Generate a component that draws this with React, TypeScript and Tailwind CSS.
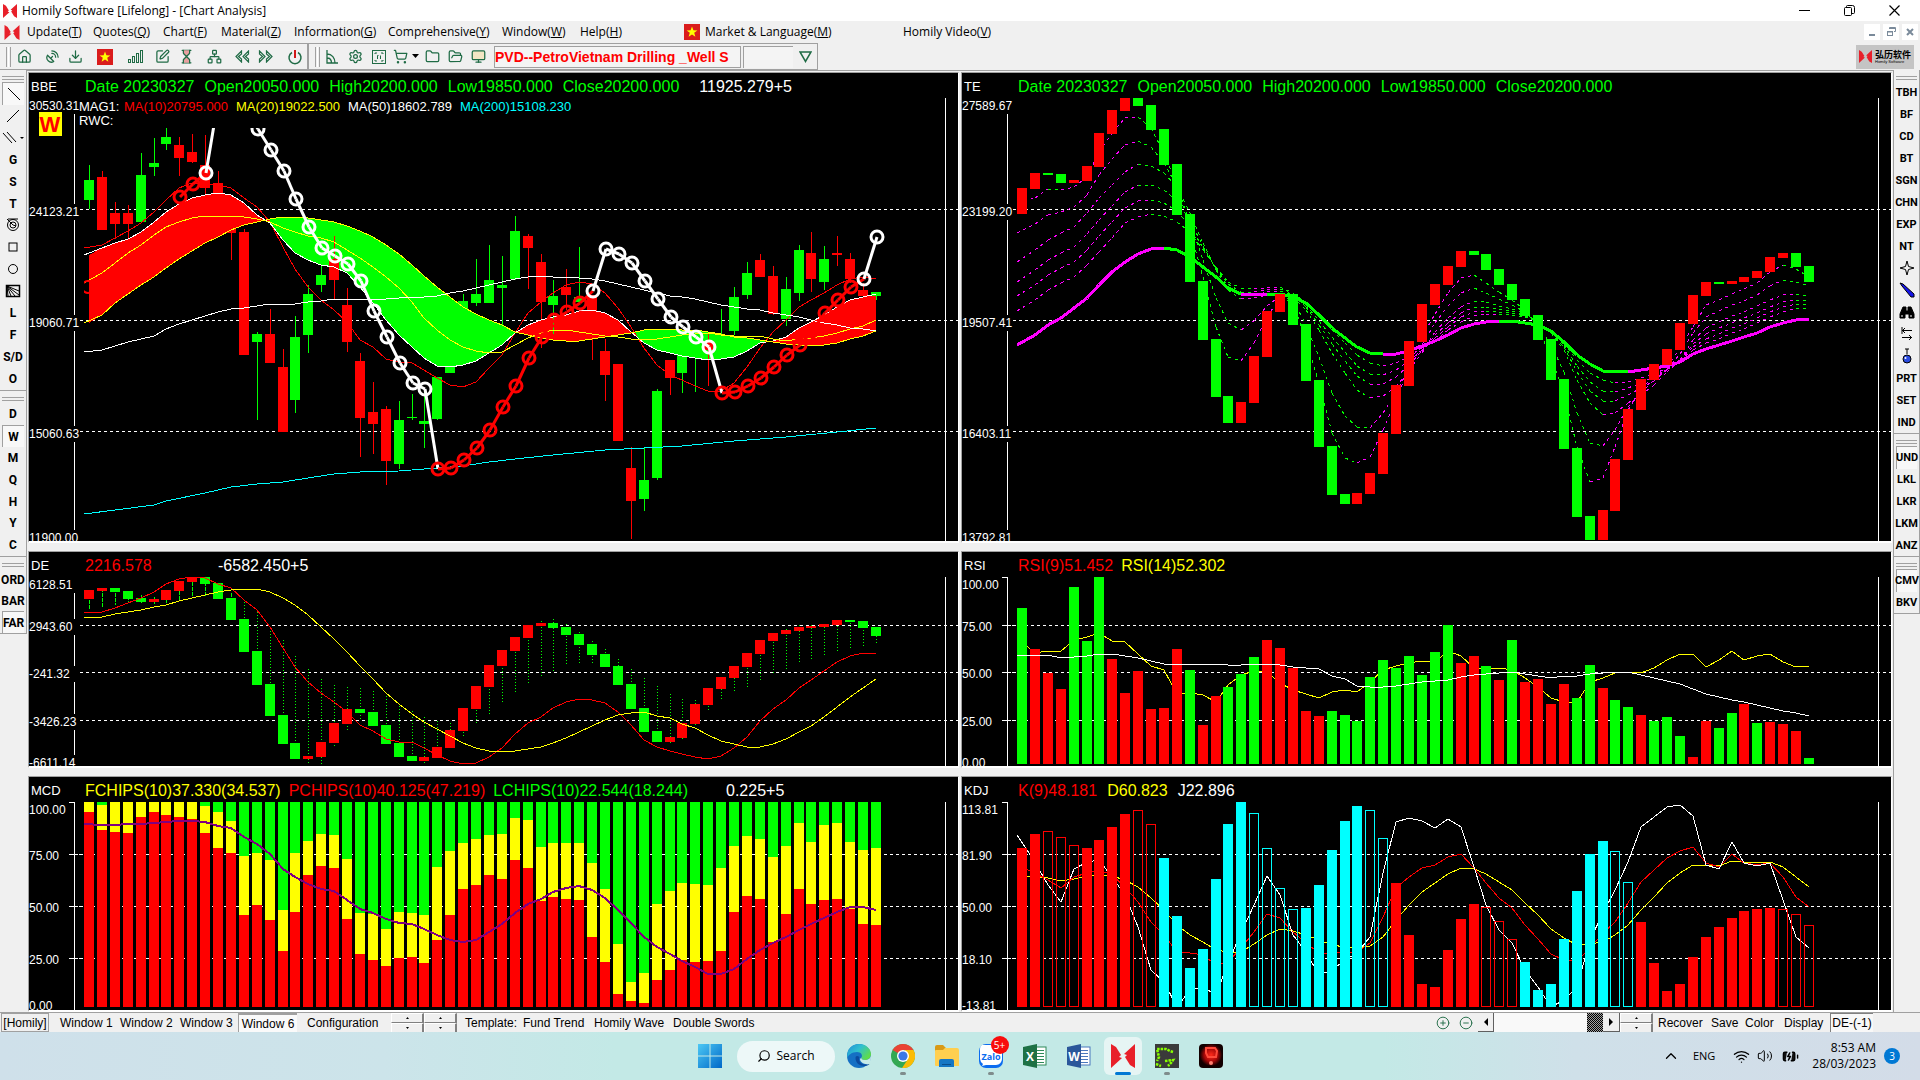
import React from 'react';
import {
  BatteryCharging,
  ChevronUp,
  CircleMinus,
  CirclePlus,
  Download,
  Folder,
  FolderOpen,
  Hourglass,
  House,
  Monitor,
  Network,
  Power,
  SatelliteDish,
  Search,
  Settings,
  ShoppingCart,
  SquarePen,
  Volume2,
  Wifi,
} from 'lucide-react';

const RED = '#ff0000';
const GREEN = '#00ff00';
const YELLOW = '#ffff00';
const CYAN = '#00ffff';
const WHITE = '#ffffff';
const MAGENTA = '#ff00ff';

// Series are stored in thirds of a pixel, one entry for each weekly bar.
const px = (v: number) => Math.round(v / 3);
const barX = (i: number) => Math.round(55 + 12.9 * i);
const midX = (i: number) => Math.round(60 + 12.9 * i);
const lineX = (i: number) => (i === 0 ? 55 : midX(i));
const toPoints = (ys: number[]) => ys.map((y, i) => `${lineX(i)},${px(y)}`).join(' ');

type Candle = [string, number, number, number, number];

const candles: Candle[] = [
  ['G', 330, 390, 285, 417], ['R', 321, 480, 303, 480], ['R', 429, 462, 396, 507], ['R', 429, 462, 405, 507],
  ['G', 315, 456, 249, 456], ['G', 279, 291, 204, 318], ['G', 201, 222, 174, 240], ['R', 225, 264, 201, 318],
  ['R', 246, 276, 192, 279], ['R', 285, 354, 195, 375], ['R', 339, 420, 303, 420], ['R', 400, 489, 400, 570],
  ['R', 486, 855, 477, 855], ['G', 792, 816, 786, 1050], ['R', 792, 879, 717, 879], ['R', 891, 1086, 837, 1086],
  ['G', 801, 990, 738, 1029], ['G', 672, 795, 645, 849], ['G', 615, 645, 582, 666], ['R', 567, 630, 498, 687],
  ['R', 705, 816, 654, 846], ['R', 873, 1044, 849, 1161], ['R', 1026, 1062, 936, 1152], ['R', 1017, 1173, 1008, 1245],
  ['G', 1050, 1182, 993, 1197], ['G', 1041, 1044, 972, 1050], ['G', 1053, 1062, 960, 1134], ['G', 921, 1047, 921, 1050],
  ['G', 870, 909, 870, 909], ['G', 693, 735, 672, 735], ['G', 672, 699, 567, 708], ['G', 630, 699, 525, 699],
  ['G', 645, 654, 558, 765], ['G', 483, 627, 438, 630], ['R', 498, 534, 492, 657], ['R', 576, 696, 552, 834],
  ['G', 678, 705, 630, 792], ['R', 651, 675, 597, 720], ['G', 681, 696, 531, 700], ['R', 675, 740, 675, 870],
  ['R', 843, 915, 807, 993], ['R', 882, 1113, 882, 1113], ['R', 1194, 1293, 1131, 1407], ['G', 1230, 1287, 1131, 1323],
  ['G', 963, 1224, 957, 1230], ['R', 870, 924, 870, 975], ['G', 840, 909, 840, 969], ['G', 800, 810, 800, 966],
  ['R', 816, 840, 792, 948], ['G', 795, 800, 717, 800], ['G', 681, 783, 651, 795], ['G', 609, 675, 576, 687],
  ['R', 570, 621, 552, 621], ['R', 618, 732, 588, 735], ['G', 657, 747, 621, 768], ['G', 540, 669, 525, 693],
  ['R', 549, 627, 486, 666], ['G', 567, 636, 528, 660], ['R', 549, 555, 498, 588], ['R', 567, 627, 549, 640],
  ['R', 660, 678, 640, 678], ['G', 666, 678, 666, 690],
];

const fastBand = [
  555, 535, 520, 507, 487, 457, 425, 402, 384, 375, 370, 375, 400, 435, 458, 510, 548, 570, 585, 590, 610, 650, 700,
  750, 795, 830, 865, 888, 892, 885, 872, 850, 825, 790, 765, 750, 742, 735, 722, 720, 730, 750, 785, 820, 840, 850,
  857, 865, 870, 868, 860, 842, 820, 812, 800, 775, 755, 735, 710, 690, 682, 673,
];
const slowBand = [
  760, 735, 700, 672, 645, 622, 595, 568, 543, 520, 500, 480, 465, 455, 446, 442, 442, 444, 449, 457, 467, 482, 502,
  525, 553, 585, 617, 650, 680, 710, 732, 750, 765, 785, 795, 805, 811, 814, 812, 808, 800, 795, 788, 780, 778, 778,
  779, 780, 785, 792, 800, 805, 810, 816, 821, 824, 827, 825, 818, 808, 798, 783,
];
const ma20 = [
  640, 610, 580, 550, 525, 495, 470, 455, 444, 439, 438, 437, 442, 447, 455, 475, 487, 497, 505, 515, 540, 565, 590,
  620, 655, 695, 743, 780, 810, 830, 843, 850, 845, 825, 805, 788, 780, 780, 785, 793, 798, 802, 808, 810, 806, 800,
  795, 792, 790, 795, 797, 797, 798, 807, 814, 808, 804, 798, 790, 778, 768, 750,
];
const ma10 = [
  535, 525, 505, 483, 458, 425, 390, 355, 340, 342, 345, 355, 383, 412, 455, 530, 597, 650, 690, 720, 755, 810, 832,
  868, 876, 878, 900, 925, 945, 952, 935, 895, 855, 790, 730, 695, 668, 645, 637, 643, 668, 715, 770, 835, 885, 915,
  930, 948, 964, 962, 940, 890, 835, 785, 750, 712, 690, 668, 645, 628, 620, 627,
];
const ma50 = [
  847, 840, 827, 817, 808, 797, 778, 762, 750, 737, 726, 718, 713, 707, 703, 703, 702, 697, 692, 688, 686, 688, 688,
  688, 685, 682, 680, 677, 670, 662, 655, 645, 635, 627, 622, 619, 620, 620, 623, 627, 634, 642, 650, 660, 668, 677,
  682, 688, 697, 704, 712, 716, 720, 728, 735, 741, 750, 758, 766, 773, 777, 782,
];
const ma200: [number, number][] = [
  [0, 1333], [5, 1304], [6, 1292], [9, 1268], [11, 1252], [13, 1243], [15, 1236], [17, 1225], [19, 1213], [21, 1207],
  [24, 1202], [27, 1193], [29, 1187], [31, 1177], [33, 1168], [36, 1155], [40, 1140], [43, 1134], [46, 1127],
  [50, 1114], [54, 1100], [58, 1085], [61, 1075],
];

// [bar, y, colour]
const rwc: [number, number, string][] = [
  [7, 380, RED], [8, 343, RED], [9, 310, WHITE], [10, 75, WHITE], [12, 110, WHITE], [13, 176, WHITE], [14, 240, WHITE],
  [15, 302, WHITE], [16, 388, WHITE], [17, 472, WHITE], [18, 534, WHITE], [19, 558, WHITE], [20, 583, WHITE],
  [21, 633, WHITE], [22, 723, WHITE], [23, 800, WHITE], [24, 878, WHITE], [25, 938, WHITE], [26, 957, WHITE],
  [27, 1197, RED], [28, 1193, RED], [29, 1170, RED], [30, 1135, RED], [31, 1080, RED], [32, 1012, RED], [33, 948, RED],
  [34, 865, RED], [35, 800, RED], [36, 750, RED], [37, 727, RED], [38, 699, RED], [39, 664, WHITE], [40, 538, WHITE],
  [41, 552, WHITE], [42, 580, WHITE], [43, 632, WHITE], [44, 688, WHITE], [45, 742, WHITE], [46, 772, WHITE],
  [47, 802, WHITE], [48, 831, WHITE], [49, 970, RED], [50, 965, RED], [51, 948, RED], [52, 925, RED], [53, 890, RED],
  [54, 856, RED], [55, 825, RED], [56, 782, RED], [57, 728, RED], [58, 690, RED], [59, 650, RED], [60, 628, WHITE],
  [61, 502, WHITE],
];

const teBars: [string, number, number][] = [
  ['R', 354, 432], ['R', 309, 357], ['G', 309, 315], ['G', 312, 339], ['R', 330, 339], ['R', 288, 333], ['R', 189, 291],
  ['R', 120, 192], ['R', 84, 123], ['G', 84, 108], ['G', 105, 180], ['G', 177, 285], ['G', 282, 435], ['G', 432, 636],
  ['G', 633, 810], ['G', 807, 981], ['G', 978, 1059], ['R', 996, 1059], ['R', 858, 999], ['R', 723, 861],
  ['R', 672, 726], ['G', 672, 765], ['G', 762, 933], ['G', 930, 1131], ['G', 1128, 1275], ['G', 1272, 1302],
  ['R', 1269, 1302], ['R', 1209, 1272], ['R', 1089, 1212], ['R', 945, 1092], ['R', 813, 948], ['R', 702, 816],
  ['R', 642, 705], ['R', 588, 645], ['R', 543, 591], ['G', 543, 555], ['G', 552, 600], ['G', 597, 645],
  ['G', 642, 690], ['G', 687, 738], ['G', 735, 810], ['G', 807, 930], ['G', 927, 1137], ['G', 1134, 1341],
  ['G', 1338, 1410], ['R', 1320, 1410], ['R', 1167, 1323], ['R', 1017, 1170], ['R', 927, 1020], ['R', 882, 930],
  ['R', 837, 885], ['R', 759, 840], ['R', 675, 762], ['R', 636, 678], ['G', 636, 642], ['R', 633, 642],
  ['R', 621, 636], ['R', 603, 624], ['R', 561, 606], ['R', 549, 564], ['G', 549, 591], ['G', 588, 636],
];
const teBase = [
  824, 795, 765, 745, 715, 685, 645, 607, 575, 552, 538, 533, 540, 562, 590, 622, 655, 671, 671, 671, 672, 680, 700,
  735, 775, 805, 830, 848, 853, 852, 842, 828, 813, 795, 775, 763, 756, 753, 754, 758, 766, 782, 815, 855, 883, 902,
  904, 905, 901, 895, 888, 875, 852, 838, 826, 813, 800, 788, 772, 760, 751, 748,
];
const teFast = [
  400, 385, 358, 361, 350, 320, 245, 190, 143, 140, 175, 250, 345, 480, 620, 770, 860, 873, 820, 740, 685, 700, 810,
  940, 1090, 1165, 1180, 1162, 1080, 990, 890, 800, 732, 668, 625, 616, 640, 665, 690, 720, 775, 860, 970, 1130, 1237,
  1223, 1130, 1020, 960, 915, 890, 835, 770, 705, 690, 672, 658, 640, 605, 586, 597, 620,
];
const teMid = [
  575, 540, 510, 490, 470, 430, 385, 345, 305, 283, 288, 310, 350, 430, 520, 600, 660, 688, 685, 675, 670, 680, 720,
  780, 850, 910, 960, 983, 978, 950, 900, 850, 785, 745, 710, 693, 697, 707, 718, 732, 755, 790, 840, 930, 1000, 1035,
  1030, 1000, 975, 945, 905, 870, 810, 775, 755, 738, 725, 708, 690, 675, 672, 677,
];
const teSlow = [
  724, 690, 660, 640, 620, 585, 545, 505, 460, 440, 433, 437, 455, 485, 540, 590, 635, 655, 658, 655, 652, 670, 700,
  740, 780, 820, 855, 880, 887, 880, 860, 835, 812, 780, 755, 738, 733, 732, 734, 740, 757, 785, 820, 870, 910, 930,
  938, 935, 925, 912, 895, 870, 840, 820, 806, 790, 776, 760, 742, 725, 714, 718,
];
const mix = (a: number[], b: number[], t: number) => a.map((v, i) => v + (b[i] - v) * t);
const teRibbon = [teFast, mix(teFast, teMid, 0.5), teMid, mix(teMid, teSlow, 0.4), mix(teMid, teSlow, 0.7), teSlow];

const deBars: Candle[] = [
  ['R', 150, 177, 150, 210], ['R', 144, 153, 144, 200], ['G', 144, 156, 144, 195], ['G', 153, 177, 153, 189],
  ['G', 174, 186, 165, 189], ['R', 177, 186, 171, 192], ['R', 150, 180, 150, 189], ['R', 123, 153, 123, 183],
  ['R', 111, 126, 111, 172], ['G', 111, 132, 111, 168], ['G', 129, 177, 129, 177], ['G', 174, 240, 160, 240],
  ['G', 237, 336, 186, 336], ['G', 333, 435, 216, 435], ['G', 432, 528, 264, 528], ['G', 525, 612, 300, 612],
  ['G', 609, 657, 348, 657], ['R', 648, 657, 387, 675], ['R', 606, 651, 417, 672], ['R', 549, 609, 435, 624],
  ['R', 507, 552, 441, 573], ['G', 507, 519, 444, 543], ['G', 516, 558, 453, 558], ['G', 555, 612, 468, 612],
  ['G', 609, 651, 498, 651], ['G', 648, 663, 513, 663], ['R', 651, 663, 531, 669], ['R', 621, 654, 543, 660],
  ['R', 570, 624, 549, 624], ['R', 504, 573, 504, 591], ['R', 438, 507, 438, 555], ['R', 375, 441, 375, 522],
  ['R', 330, 378, 330, 489], ['R', 291, 333, 291, 462], ['R', 255, 294, 255, 435], ['R', 249, 258, 243, 411],
  ['G', 249, 264, 237, 393], ['G', 261, 285, 252, 378], ['G', 282, 315, 276, 372], ['G', 312, 345, 303, 369],
  ['G', 342, 381, 327, 381], ['G', 378, 435, 357, 435], ['G', 432, 507, 387, 507], ['G', 504, 576, 414, 576],
  ['G', 573, 606, 438, 606], ['R', 591, 606, 462, 615], ['R', 549, 594, 477, 603], ['R', 492, 552, 480, 560],
  ['R', 444, 495, 444, 516], ['R', 411, 447, 411, 483], ['R', 378, 414, 378, 456], ['R', 339, 381, 339, 441],
  ['R', 300, 342, 300, 423], ['R', 279, 303, 279, 405], ['R', 270, 282, 267, 387], ['R', 261, 273, 255, 372],
  ['R', 258, 264, 255, 357], ['R', 252, 261, 252, 348], ['R', 240, 255, 240, 336], ['G', 240, 246, 240, 324],
  ['G', 243, 264, 243, 318], ['G', 261, 288, 261, 312],
];
const deFast = [
  217, 217, 205, 190, 175, 155, 132, 118, 112, 113, 132, 145, 180, 210, 260, 325, 380, 425, 460, 485, 515, 555, 572,
  597, 606, 607, 625, 645, 663, 673, 670, 650, 625, 582, 550, 532, 505, 485, 478, 481, 490, 517, 555, 600, 622, 634,
  643, 650, 656, 649, 625, 590, 543, 508, 480, 443, 420, 393, 367, 347, 340, 343,
];
const deSlow = [
  235, 230, 222, 216, 211, 202, 194, 184, 173, 164, 155, 149, 146, 146, 155, 175, 195, 225, 260, 297, 335, 378, 418,
  460, 492, 522, 545, 567, 587, 608, 623, 633, 637, 634, 628, 621, 610, 593, 575, 558, 540, 524, 518, 517, 527, 535,
  551, 565, 584, 602, 613, 622, 622, 613, 598, 576, 557, 530, 500, 471, 443, 417,
];

const chips: [number, number][] = [
  [786, 816], [795, 870], [786, 876], [786, 879], [786, 831], [786, 816], [786, 825], [786, 831], [786, 837],
  [798, 879], [816, 924], [843, 939], [948, 1125], [939, 1095], [960, 1140], [1110, 1233], [939, 1116], [903, 1005],
  [882, 978], [885, 984], [957, 1137], [1119, 1242], [1122, 1260], [1167, 1278], [1116, 1254], [1119, 1251],
  [1125, 1269], [981, 1200], [933, 1125], [909, 1047], [897, 1035], [885, 1005], [882, 1017], [834, 960], [840, 984],
  [921, 1083], [909, 1071], [909, 1077], [909, 1080], [969, 1191], [1047, 1266], [1212, 1362], [1326, 1383],
  [1299, 1389], [1092, 1320], [1053, 1290], [1029, 1260], [1032, 1266], [1035, 1263], [984, 1233], [918, 1116],
  [888, 1068], [897, 1077], [951, 1206], [918, 1122], [849, 1047], [906, 1092], [855, 1080], [849, 1077], [906, 1107],
  [930, 1152], [924, 1155],
];
const chipsLine = [
  852, 854, 855, 852, 852, 848, 846, 842, 843, 847, 858, 865, 890, 912, 943, 987, 1012, 1032, 1046, 1053, 1080, 1107,
  1120, 1138, 1150, 1153, 1168, 1185, 1200, 1206, 1200, 1175, 1152, 1118, 1092, 1077, 1055, 1043, 1038, 1050, 1075,
  1110, 1150, 1190, 1222, 1243, 1263, 1281, 1301, 1301, 1287, 1257, 1229, 1210, 1192, 1169, 1151, 1133, 1115, 1101,
  1102, 1110,
];

const rsiBars =
  'G204 R327 R399 R447 G141 G303 G111 R357 R459 R393 R507 R504 R327 G390 R555 R468 G441 G402 G351 R300 R324 R384 R513 R528 G513 G525 G543 G411 G360 G384 G348 G405 G336 G255 R369 R348 G378 R420 G300 R426 R417 R492 R432 G474 G375 R444 G480 G501 R525 G543 G531 G588 R651 R543 G564 G519 R492 G549 R546 R552 R573 G654'.split(
    ' ',
  );
const rsiYellow = [
  295, 338, 334, 334, 300, 290, 280, 303, 307, 343, 378, 390, 462, 460, 464, 487, 435, 405, 393, 395, 430, 450, 462,
  475, 455, 451, 455, 425, 390, 377, 370, 362, 365, 333, 347, 385, 385, 385, 390, 415, 440, 473, 487, 487, 425, 413,
  398, 396, 398, 385, 360, 341, 343, 380, 360, 332, 360, 347, 343, 367, 382, 379,
];
const rsiWhite = [
  349, 344, 344, 355, 350, 349, 341, 341, 349, 355, 362, 373, 374, 371, 376, 373, 376, 374, 371, 371, 376, 380, 384,
  388, 408, 418, 438, 442, 440, 439, 431, 425, 424, 419, 410, 404, 401, 400, 397, 403, 409, 415, 409, 409, 401, 398,
  395, 397, 406, 415, 424, 433, 448, 463, 472, 481, 487, 494, 505, 512, 520, 529,
];

// lower case = hollow bar
const kdjBars =
  'R924 R882 r873 r891 r915 R924 R900 R861 R822 r810 r852 C954 C1128 C1284 C1227 C1017 C852 C786 c819 c924 c1044 c1107 C1104 C1035 C930 C843 C798 c810 c894 R1029 R1185 R1332 R1341 R1230 R1137 R1092 r1101 r1143 r1197 C1266 C1350 C1332 C1197 C1053 C942 C903 c933 c1026 R1146 R1269 R1353 R1332 R1251 R1191 R1161 R1134 R1113 R1107 R1104 r1107 r1122 r1155'.split(
    ' ',
  );
const kdjJ = [
  884, 965, 1035, 1086, 988, 965, 960, 1010, 1065, 1160, 1290, 1325, 1400, 1350, 1340, 1365, 1270, 1180, 1095, 1008,
  1065, 1185, 1235, 1305, 1290, 1260, 1240, 1190, 1000, 845, 835, 842, 865, 838, 862, 980, 1095, 1170, 1210, 1290,
  1340, 1400, 1380, 1340, 1200, 1120, 1050, 965, 860, 830, 800, 794, 827, 975, 987, 905, 968, 978, 970, 1080, 1190,
  1223,
];
const kdjK = [
  975, 1000, 1020, 1045, 1010, 998, 990, 1005, 1040, 1085, 1145, 1185, 1235, 1238, 1245, 1275, 1265, 1225, 1175, 1123,
  1133, 1175, 1210, 1240, 1238, 1237, 1235, 1210, 1130, 1045, 1010, 985, 975, 950, 943, 985, 1030, 1075, 1105, 1155,
  1198, 1242, 1260, 1262, 1225, 1180, 1145, 1090, 1025, 990, 955, 933, 922, 970, 980, 943, 968, 975, 970, 1010, 1072,
  1102,
];
const kdjD = [
  1008, 1010, 1013, 1024, 1017, 1008, 1006, 1008, 1020, 1040, 1073, 1110, 1155, 1185, 1205, 1230, 1237, 1235, 1213,
  1185, 1168, 1172, 1185, 1200, 1215, 1220, 1223, 1218, 1190, 1140, 1095, 1055, 1030, 1003, 985, 986, 1003, 1026,
  1050, 1088, 1125, 1166, 1195, 1216, 1212, 1205, 1185, 1155, 1110, 1070, 1030, 998, 974, 974, 977, 964, 967, 968,
  967, 980, 1010, 1040,
];

const colorOf: Record<string, string> = { R: RED, G: GREEN, C: CYAN };

function Line({ data, color, width = 1 }: { data: number[]; color: string; width?: number }) {
  return <polyline points={toPoints(data)} fill="none" stroke={color} strokeWidth={width} />;
}

// Line whose colour follows its direction
function TrendLine({ data, dashed }: { data: number[]; dashed?: boolean }) {
  return (
    <g strokeWidth={dashed ? 1 : 3} strokeDasharray={dashed ? '3 4' : undefined}>
      {data.slice(1).map((y, i) => (
        <line
          key={i}
          x1={lineX(i)}
          y1={px(data[i])}
          x2={midX(i + 1)}
          y2={px(y)}
          stroke={y > data[i] ? GREEN : MAGENTA}
        />
      ))}
    </g>
  );
}

function Grid({ rows }: { rows: number[] }) {
  return (
    <g stroke={WHITE}>
      {rows.map((y) => (
        <line key={y} x1="51" x2="100%" y1={y + 0.5} y2={y + 0.5} strokeDasharray="3 3" />
      ))}
      <line x1="916.5" x2="916.5" y1="25" y2="100%" />
    </g>
  );
}

interface AxisProps {
  labels: [string, number][];
  ticks?: number[];
  top: number;
}

function Axis({ labels, ticks, top }: AxisProps) {
  return (
    <g>
      <line x1="45.5" x2="45.5" y1={top} y2="100%" stroke={WHITE} />
      {ticks && <line x1="40" x2="46" y1={top + 0.5} y2={top + 0.5} stroke={WHITE} />}
      {ticks?.map((y) => <line key={y} x1="40" x2="53" y1={y + 0.5} y2={y + 0.5} stroke={WHITE} strokeDasharray="9 1" />)}
      {labels.map(([text, y]) => (
        <g key={text}>
          {!ticks && <rect x="0" y={y - 7} width="51" height="16" fill="#000" />}
          <text x="0" y={y + 5} fontSize="12" fill={WHITE}>
            {text}
          </text>
        </g>
      ))}
    </g>
  );
}

interface PanelProps {
  name: string;
  header: React.ReactNode;
  children: React.ReactNode;
}

function Panel({ name, header, children }: PanelProps) {
  return (
    <section
      aria-label={name}
      className="relative overflow-hidden border-t border-r border-b-2 border-l border-t-[#a0a0a0] border-r-white border-b-white border-l-[#a0a0a0] bg-black"
    >
      <svg className="absolute inset-0 h-full w-full" shapeRendering="crispEdges">
        {children}
      </svg>
      <div className="relative">
        <div className="flex h-7 items-center whitespace-nowrap text-[16px]">
          <h2 className="w-14 pl-0.5 text-[13px] text-white">{name}</h2>
          {header}
        </div>
      </div>
    </section>
  );
}

function Quote() {
  return (
    <div className="flex gap-2.5 text-[#00ff00]">
      <span>Date 20230327</span>
      <span>Open20050.000</span>
      <span>High20200.000</span>
      <span>Low19850.000</span>
      <span>Close20200.000</span>
    </div>
  );
}

function BbeChart() {
  const bands: React.ReactNode[] = [];
  for (let i = 0; i < 61; i++) {
    const a = midX(i);
    const b = midX(i + 1);
    const bull = fastBand[i] + fastBand[i + 1] < slowBand[i] + slowBand[i + 1];
    bands.push(
      <polygon
        key={i}
        fill={bull ? RED : GREEN}
        points={`${a},${px(fastBand[i])} ${b},${px(fastBand[i + 1])} ${b},${px(slowBand[i + 1])} ${a},${px(slowBand[i])}`}
      />,
    );
  }

  return (
    <Panel
      name="BBE"
      header={
        <>
          <Quote />
          <span className="ml-5 text-white">11925.279+5</span>
        </>
      }
    >
      <Grid rows={[136, 247, 358]} />
      <Axis
        top={40}
        labels={[
          ['30530.31', 32],
          ['24123.21', 138],
          ['19060.71', 249],
          ['15060.63', 360],
          ['11900.00', 464],
        ]}
      />
      <g fontSize="13">
        <text x="50" y="38" fill={WHITE}>MAG1:</text>
        <text x="95" y="38" fill={RED}>MA(10)20795.000</text>
        <text x="207" y="38" fill={YELLOW}>MA(20)19022.500</text>
        <text x="319" y="38" fill={WHITE}>MA(50)18602.789</text>
        <text x="431" y="38" fill={CYAN}>MA(200)15108.230</text>
        <text x="50" y="52" fill={WHITE}>RWC:</text>
      </g>
      <rect x="10" y="39" width="23" height="24" fill={YELLOW} />
      <text x="21" y="59" fill={RED} fontSize="22" fontWeight="bold" textAnchor="middle">
        W
      </text>
      <g transform="translate(0 -3)">
        {bands}
        {candles.map(([c, top, bottom, high, low], i) => (
          <g key={i} fill={colorOf[c]}>
            <rect x={barX(i)} y={px(top)} width="10" height={Math.max(1, px(bottom) - px(top))} />
            <rect x={barX(i) + 5} y={px(high)} width="1" height={px(low) - px(high)} />
          </g>
        ))}
        <Line data={ma10} color={RED} />
        <Line data={fastBand} color={WHITE} />
        <Line data={slowBand} color={YELLOW} />
        <Line data={ma20} color={YELLOW} />
        <Line data={ma50} color={WHITE} />
        <polyline points={ma200.map(([i, y]) => `${lineX(i)},${px(y)}`).join(' ')} fill="none" stroke={CYAN} />
        <clipPath id="plot">
          <rect x="55" y="58" width="860" height="420" />
        </clipPath>
        <g clipPath="url(#plot)" fill="none" shapeRendering="auto">
          <circle cx="59" cy="217" r="6" stroke={RED} strokeWidth="2" />
          {rwc.slice(1).map(([i, y], k) => (
            <line
              key={i}
              x1={midX(rwc[k][0]) + 1}
              y1={px(rwc[k][1])}
              x2={midX(i) + 1}
              y2={px(y)}
              stroke={rwc[k][2]}
              strokeWidth="3"
            />
          ))}
          {rwc.map(([i, y, c]) => (
            <circle key={i} cx={midX(i) + 1} cy={px(y)} r="6" stroke={c} strokeWidth="3" />
          ))}
        </g>
      </g>
    </Panel>
  );
}

function TeChart() {
  return (
    <Panel name="TE" header={<Quote />}>
      <Grid rows={[136, 247, 358]} />
      <Axis
        top={40}
        labels={[
          ['27589.67', 32],
          ['23199.20', 138],
          ['19507.41', 249],
          ['16403.11', 360],
          ['13792.81', 464],
        ]}
      />
      <g transform="translate(0 -3)">
        {teRibbon.map((data, i) => (
          <TrendLine key={i} data={data} dashed />
        ))}
        <TrendLine data={teBase} />
        {teBars.map(([c, top, bottom], i) => (
          <rect key={i} x={barX(i)} y={px(top)} width="10" height={px(bottom) - px(top)} fill={colorOf[c]} />
        ))}
      </g>
    </Panel>
  );
}

function DeChart() {
  return (
    <Panel
      name="DE"
      header={
        <>
          <span className="w-[133px] text-[#ff0000]">2216.578</span>
          <span className="text-white">-6582.450+5</span>
        </>
      }
    >
      <Grid rows={[73, 120, 168]} />
      <Axis
        top={40}
        labels={[
          ['6128.51', 32],
          ['2943.60', 74],
          ['-241.32', 121],
          ['-3426.23', 169],
          ['-6611.14', 210],
        ]}
      />
      <g transform="translate(0 -12)">
        {deBars.map(([c, top, bottom, high, low], i) => (
          <g key={i}>
            <line
              x1={barX(i) + 5.5}
              x2={barX(i) + 5.5}
              y1={px(high)}
              y2={px(low)}
              stroke={GREEN}
              strokeDasharray={i < 12 ? '4 1' : '1 2'}
            />
            <rect x={barX(i)} y={px(top)} width="10" height={px(bottom) - px(top)} fill={colorOf[c]} />
          </g>
        ))}
        <Line data={deFast} color={RED} />
        <Line data={deSlow} color={YELLOW} />
      </g>
    </Panel>
  );
}

function RsiChart() {
  return (
    <Panel
      name="RSI"
      header={
        <div className="flex gap-2">
          <span className="text-[#ff0000]">RSI(9)51.452</span>
          <span className="text-[#ffff00]">RSI(14)52.302</span>
        </div>
      }
    >
      <Grid rows={[73, 120, 168]} />
      <Axis
        top={25}
        ticks={[73, 120, 168]}
        labels={[
          ['100.00', 32],
          ['75.00', 74],
          ['50.00', 121],
          ['25.00', 169],
          ['0.00', 210],
        ]}
      />
      <g transform="translate(0 -12)">
        <Line data={rsiYellow} color={YELLOW} />
        {rsiBars.map((bar, i) => {
          const y = px(Number(bar.slice(1)));
          return <rect key={i} x={barX(i)} y={y} width="10" height={224 - y} fill={colorOf[bar[0]]} />;
        })}
        <Line data={rsiWhite} color={WHITE} />
      </g>
    </Panel>
  );
}

function McdChart() {
  return (
    <Panel
      name="MCD"
      header={
        <>
          <div className="flex gap-2">
            <span className="text-[#ffff00]">FCHIPS(10)37.330(34.537)</span>
            <span className="text-[#ff0000]">PCHIPS(10)40.125(47.219)</span>
            <span className="text-[#00ff00]">LCHIPS(10)22.544(18.244)</span>
          </div>
          <span className="ml-[38px] text-white">0.225+5</span>
        </>
      }
    >
      <Grid rows={[77, 129, 181]} />
      <Axis
        top={25}
        ticks={[77, 129, 181]}
        labels={[
          ['100.00', 32],
          ['75.00', 78],
          ['50.00', 130],
          ['25.00', 182],
          ['0.00', 228],
        ]}
      />
      <g transform="translate(0 -237)">
        {chips.map(([green, yellow], i) => (
          <g key={i}>
            <rect x={barX(i)} y="262" width="10" height="205" fill={RED} />
            <rect x={barX(i)} y="262" width="10" height={px(yellow) - 262} fill={YELLOW} />
            <rect x={barX(i)} y="262" width="10" height={px(green) - 262} fill={GREEN} />
          </g>
        ))}
        <Line data={chipsLine} color="#800080" width={2} />
      </g>
    </Panel>
  );
}

function KdjChart() {
  return (
    <Panel
      name="KDJ"
      header={
        <div className="flex gap-2.5">
          <span className="text-[#ff0000]">K(9)48.181</span>
          <span className="text-[#ffff00]">D60.823</span>
          <span className="text-white">J22.896</span>
        </div>
      }
    >
      <Grid rows={[77, 129, 181]} />
      <Axis
        top={25}
        ticks={[77, 129, 181]}
        labels={[
          ['113.81', 32],
          ['81.90', 78],
          ['50.00', 130],
          ['18.10', 182],
          ['-13.81', 228],
        ]}
      />
      <g transform="translate(0 -237)">
        <Line data={kdjD} color={YELLOW} />
        <Line data={kdjK} color={RED} />
        <Line data={kdjJ} color={WHITE} />
        {kdjBars.map((bar, i) => {
          const y = px(Number(bar.slice(1)));
          const kind = bar[0].toUpperCase();
          return bar[0] === kind ? (
            <rect key={i} x={barX(i)} y={y} width="10" height={467 - y} fill={colorOf[kind]} />
          ) : (
            <rect key={i} x={barX(i) + 0.5} y={y + 0.5} width="9" height={466 - y} fill="none" stroke={colorOf[kind]} />
          );
        })}
      </g>
    </Panel>
  );
}

function BrandMark({ className }: { className?: string }) {
  return (
    <svg viewBox="0 0 24 24" className={className} fill="#e8202a" aria-hidden="true">
      <path d="M0 0 L5 3 L10 11 L8 13 L11 14 L0 24 Z" />
      <path d="M24 0 L24 24 L19 21 L14 13 L16 11 L13 10 Z" />
    </svg>
  );
}

function StarFlag({ className }: { className?: string }) {
  return (
    <svg viewBox="0 0 16 16" className={className} aria-hidden="true">
      <rect width="16" height="16" fill="#da1c1c" />
      <path d="M8 2.5 L9.4 6.3 L13.4 6.4 L10.2 8.8 L11.4 12.8 L8 10.4 L4.6 12.8 L5.8 8.8 L2.6 6.4 L6.6 6.3 Z" fill="#ffff00" />
    </svg>
  );
}

const menus = [
  { label: 'Update', hot: 'T', width: 'w-[66px]' },
  { label: 'Quotes', hot: 'Q', width: 'w-[70px]' },
  { label: 'Chart', hot: 'F', width: 'w-[58px]' },
  { label: 'Material', hot: 'Z', width: 'w-[73px]' },
  { label: 'Information', hot: 'G', width: 'w-[94px]' },
  { label: 'Comprehensive', hot: 'Y', width: 'w-[114px]' },
  { label: 'Window', hot: 'W', width: 'w-[78px]' },
  { label: 'Help', hot: 'H', width: 'w-[104px]' },
];

function MenuLabel({ label, hot }: { label: string; hot: string }) {
  return (
    <>
      {label}(<u className="underline-offset-1">{hot}</u>)
    </>
  );
}

function TitleBar() {
  return (
    <header className="flex h-[21px] items-center bg-white pl-0.5 text-[12px]">
      <BrandMark className="h-3.5 w-4" />
      <h1 className="ml-1 flex-1">Homily Software [Lifelong] - [Chart Analysis]</h1>
      <button aria-label="Minimize" className="flex w-[45px] justify-center">
        <svg width="11" height="11"><path d="M0 5.5h11" stroke="#000" /></svg>
      </button>
      <button aria-label="Restore" className="flex w-[45px] justify-center">
        <svg width="11" height="11" fill="none" stroke="#000">
          <rect x="0.5" y="2.5" width="7" height="8" rx="1" />
          <path d="M2.5 2.5V1.5a1 1 0 0 1 1-1h5a2 2 0 0 1 2 2v5a1 1 0 0 1-1 1h-2" />
        </svg>
      </button>
      <button aria-label="Close" className="mr-[3px] flex w-[45px] justify-center">
        <svg width="11" height="11"><path d="M0.5 0.5l10 10M10.5 0.5l-10 10" stroke="#000" strokeWidth="1.2" /></svg>
      </button>
    </header>
  );
}

function MenuBar() {
  return (
    <nav className="flex h-[22px] items-center bg-[#f0f0f0] pl-1 text-[12px] whitespace-nowrap">
      <BrandMark className="mr-[7px] h-[15px] w-4" />
      {menus.map((m) => (
        <button key={m.label} className={`${m.width} text-left`}>
          <MenuLabel label={m.label} hot={m.hot} />
        </button>
      ))}
      <StarFlag className="h-4 w-4" />
      <button className="ml-[5px] w-[198px] text-left">
        <MenuLabel label="Market & Language" hot="M" />
      </button>
      <button className="flex-1 text-left">
        <MenuLabel label="Homily Video" hot="V" />
      </button>
      <div className="flex gap-[3px] pr-0.5">
        <button aria-label="Minimize chart" className="h-4 w-4 bg-white">
          <svg width="16" height="16"><path d="M5 11h6" stroke="#7a8a9a" strokeWidth="2" /></svg>
        </button>
        <button aria-label="Restore chart" className="h-4 w-4 bg-white">
          <svg width="16" height="16" fill="none" stroke="#7a8a9a">
            <path d="M6.5 5V3.5h6v4H11M6.5 4.5h6" />
            <rect x="4.5" y="7.5" width="5" height="4" />
            <path d="M4 8h6" />
          </svg>
        </button>
        <button aria-label="Close chart" className="h-4 w-4 bg-white">
          <svg width="16" height="16"><path d="M5 5l6 6M11 5l-6 6" stroke="#7a8a9a" strokeWidth="2" /></svg>
        </button>
      </div>
    </nav>
  );
}

function Tool({ label, children, width = 'w-[23px]' }: { label: string; children: React.ReactNode; width?: string }) {
  return (
    <button aria-label={label} className={`flex ${width} shrink-0 items-center justify-center text-[#1f6b45]`}>
      {children}
    </button>
  );
}

function Rule() {
  return <span className="mx-0.5 h-5 w-px bg-[#a0a0a0]" />;
}

function Grip() {
  return (
    <span className="ml-1.5 flex gap-px">
      <i className="h-5 w-px bg-[#a0a0a0]" />
      <i className="h-5 w-px bg-white" />
      <i className="h-5 w-px bg-[#a0a0a0]" />
    </span>
  );
}

const ic = { size: 15, strokeWidth: 2 };

function ToolBar() {
  return (
    <div className="flex h-[27px] items-stretch bg-[#f0f0f0]">
      <div className="flex w-[309px] items-center border-t border-r-2 border-b border-[#a0a0a0]">
        <Grip />
        <Tool label="Home" width="w-[26px]"><House {...ic} /></Tool>
        <Rule />
        <Tool label="Receive"><SatelliteDish {...ic} /></Tool>
        <Tool label="Download"><Download {...ic} /></Tool>
        <Rule />
        <Tool label="Vietnam market" width="w-7"><StarFlag className="h-4 w-4" /></Tool>
        <Rule />
        <Tool label="Bars" width="w-6">
          <svg width="15" height="15" fill="none" stroke="currentColor">
            <rect x="0.5" y="10.5" width="2" height="3" />
            <rect x="4.5" y="7.5" width="2" height="6" />
            <rect x="8.5" y="4.5" width="2" height="9" />
            <rect x="12.5" y="1.5" width="2" height="12" />
          </svg>
        </Tool>
        <Rule />
        <Tool label="Edit"><SquarePen {...ic} /></Tool>
        <Tool label="History" width="w-6"><Hourglass {...ic} fill="#e8a0a0" /></Tool>
        <Rule />
        <Tool label="Tree" width="w-[25px]"><Network {...ic} /></Tool>
        <Rule />
        <Tool label="Back">
          <svg width="15" height="13" fill="none" stroke="currentColor" strokeWidth="1.2">
            <path d="M6.500 1v3L3.500 6.500l3 2.500v3L1 6.500zM13.500 1v3l-3 2.500 3 2.500v3L8 6.500z" />
          </svg>
        </Tool>
        <Tool label="Forward">
          <svg width="15" height="13" fill="none" stroke="currentColor" strokeWidth="1.2">
            <path d="M1.500 1v3l3 2.500-3 2.500v3L7 6.500zM8.500 1v3l3 2.500-3 2.500v3L14 6.500z" />
          </svg>
        </Tool>
        <Rule />
        <Tool label="Exit" width="w-[27px]">
          <svg width="16" height="16" fill="none" strokeWidth="1.500">
            <path d="M5 3.500a6 6 0 1 0 6 0" stroke="currentColor" />
            <path d="M8 1v8" stroke="#d01818" strokeWidth="2" />
          </svg>
        </Tool>
      </div>
      <div className="flex items-center border-t border-r border-b border-[#a0a0a0]">
        <Grip />
        <Tool label="Signal" width="w-6">
          <svg width="14" height="15" fill="none" stroke="currentColor" strokeWidth="1.3">
            <path d="M2 1v13h11M2 5c5 0 8 4 8 9M2 9c3 0 4.500 2 4.500 5" />
          </svg>
        </Tool>
        <Tool label="Options"><Settings {...ic} /></Tool>
        <Tool label="Frame">
          <svg width="14" height="14" fill="none" stroke="currentColor">
            <rect x="0.500" y="0.500" width="13" height="13" />
            <path d="M3 4V3h2M9 3h2v1M3 10v1h2M11 10v1H9M5.500 9V5.500h1M8.500 9V5.500" />
          </svg>
        </Tool>
        <Tool label="Cart" width="w-[31px]">
          <ShoppingCart {...ic} />
          <svg width="7" height="5" className="ml-1"><path d="M0 0h7L3.500 4z" fill="#000" /></svg>
        </Tool>
        <Tool label="Folder"><Folder {...ic} /></Tool>
        <Tool label="Open folder"><FolderOpen {...ic} /></Tool>
        <Tool label="Screen"><Monitor {...ic} fill="#f3e6c4" /></Tool>
        <input
          aria-label="Stock"
          defaultValue="PVD--PetroVietnam Drilling _Well S"
          className="ml-1 h-[22px] w-[247px] border border-[#a0a0a0] bg-[#f4f4f4] font-['Liberation_Sans',sans-serif] text-[14px] font-bold text-[#ff0000] outline-none"
        />
        <input
          aria-label="Code"
          className="ml-0.5 h-[22px] w-[50px] border-t border-l border-[#a0a0a0] bg-[#f4f4f4] outline-none"
        />
        <Tool label="Open list" width="w-6">
          <svg width="13" height="12" fill="none" stroke="currentColor" strokeWidth="1.5"><path d="M1 1h11L6.500 10.500z" /></svg>
        </Tool>
      </div>
      <div className="my-auto mr-[6px] ml-auto flex h-6 w-[58px] items-center gap-0.5 bg-[#c4c4c4] pl-0.5">
        <BrandMark className="h-[13px] w-[15px]" />
        <div className="font-['Liberation_Sans','Noto_Sans_CJK_SC',sans-serif]">
          <div className="text-[9px] leading-[10px] font-bold">弘历软件</div>
          <div className="text-[4px] leading-[4px]">Homily Software</div>
        </div>
      </div>
    </div>
  );
}

interface SideGroupProps {
  items: [string, React.ReactNode][];
  pressed?: string;
  height: string;
}

function SideGroup({ items, pressed, height }: SideGroupProps) {
  return (
    <div className={`flex ${height} flex-col border-r border-b border-[#a0a0a0]`}>
      <div className="mx-0.5 mt-1.5 mb-0.5 h-1 shrink-0 border-y border-[#a0a0a0]" />
      {items.map(([label, icon]) => (
        <button
          key={label}
          aria-label={label}
          className={
            label === pressed
              ? 'mx-0.5 flex flex-1 items-center justify-center border-t border-l border-[#a0a0a0] bg-[#f8f8f8]'
              : 'flex flex-1 items-center justify-center'
          }
        >
          {icon ?? label}
        </button>
      ))}
    </div>
  );
}

const stroke = { width: 16, height: 16, fill: 'none', stroke: '#000' };
const plain = (names: string) => names.split(' ').map((n): [string, React.ReactNode] => [n, null]);

const drawTools: [string, React.ReactNode][] = [
  ['Line down', <svg {...stroke}><path d="M2 2l12 12" /></svg>],
  ['Line up', <svg {...stroke}><path d="M2 14L14 2" /></svg>],
  ['Parallel lines', <svg {...stroke} width="22"><path d="M1 3l9 10M5 2l9 10" /><path d="M18 7h4l-2 2z" fill="#000" stroke="none" /></svg>],
  ...plain('G S T'),
  ['Spiral', <svg {...stroke}><circle cx="8" cy="8" r="5.500" /><circle cx="8" cy="8" r="3" /><path d="M2 2l6 6M3 2h10M8 8l3 1" /></svg>],
  ['Rectangle', <svg {...stroke}><rect x="4" y="4" width="8" height="8" /></svg>],
  ['Ellipse', <svg {...stroke}><circle cx="8" cy="8" r="4.500" /></svg>],
  ['Fan', <svg {...stroke}><rect x="1.500" y="2.500" width="13" height="11" strokeWidth="1.500" /><path d="M2 3l12 5M2 3l12 9M2 3l8 10M2 3l4 10M2 3l1 10" /></svg>],
  ...plain('L F S/D O'),
];

const signalTools: [string, React.ReactNode][] = [
  ...plain('TBH BF CD BT SGN CHN EXP NT'),
  ['Sparkle', <svg {...stroke}><path d="M8 1l1.500 5.500L15 8l-5.500 1.500L8 15l-1.500-5.500L1 8l5.500-1.500z" /></svg>],
  ['Pen', <svg {...stroke}><path d="M1 1l3 1 11 10v3h-3L3 4z" fill="#1414e8" /></svg>],
  ['Find', <svg {...stroke} fill="#000"><path d="M4 3h3v4h2V3h3l3 7v4h-5v-4H6v4H1v-4z" /><path d="M3 11v2M12 11v2" stroke="#fff" /></svg>],
  ['Swap', <svg {...stroke}><path d="M3 1v7M3 4.500h10M6 2L3.500 4.500 6 7M3 11.500h10M10 9l2.500 2.500L10 14" /></svg>],
  ['Flask', <svg {...stroke}><path d="M6 1h4M8 1v5" /><circle cx="8" cy="11" r="4" fill="#2a4be0" /><circle cx="6.500" cy="10" r="1" fill="#fff" stroke="none" /></svg>],
  ...plain('PRT SET IND'),
];

function Spinner() {
  return (
    <div className="flex h-5 w-[33px] flex-col">
      <button aria-label="Increase" className="flex h-2.5 items-center justify-center border-t border-r-2 border-b border-l border-t-white border-r-[#808080] border-b-[#808080] border-l-white">
        <svg width="3" height="2"><path d="M0 2h3L1.500 0z" /></svg>
      </button>
      <button aria-label="Decrease" className="flex h-2.5 items-center justify-center border-t border-r-2 border-b border-l border-t-white border-r-[#808080] border-b-[#808080] border-l-white">
        <svg width="3" height="2"><path d="M0 0h3L1.500 2z" /></svg>
      </button>
    </div>
  );
}

function StatusBar() {
  return (
    <div className="flex h-5 items-center border-t border-[#a0a0a0] bg-[#f0f0f0] pl-px font-['Liberation_Sans',sans-serif] text-[12px] whitespace-nowrap">
      <span className="flex h-[19px] w-12 items-center justify-center border border-[#a0a0a0]">[Homily]</span>
      <button className="ml-[11px] w-[60px] text-left">Window 1</button>
      <button className="w-[60px] text-left">Window 2</button>
      <button className="w-[58px] text-left">Window 3</button>
      <button className="h-[19px] w-[59px] border-t-2 border-l border-[#a0a0a0] bg-[#fafafa]">Window 6</button>
      <button className="ml-2.5 w-[84px] text-left">Configuration</button>
      <Spinner />
      <Spinner />
      <span className="ml-2 w-[58px]">Template:</span>
      <button className="w-[71px] text-left">Fund Trend</button>
      <button className="w-[79px] text-left">Homily Wave</button>
      <button className="text-left">Double Swords</button>
      <div className="ml-auto flex items-center">
        <button aria-label="Zoom in" className="w-[23px]"><CirclePlus size={14} strokeWidth={1.6} color="#1f6b45" /></button>
        <button aria-label="Zoom out" className="w-[19px]"><CircleMinus size={14} strokeWidth={1.6} color="#1f6b45" /></button>
        <button aria-label="Scroll left" className="flex h-[19px] w-4 items-center justify-center border-r border-b border-[#606060]">
          <svg width="4" height="8"><path d="M4 0v8L0 4z" /></svg>
        </button>
        <div className="h-[19px] w-[93px] bg-[#f9f9f9]" />
        <svg width="16" height="19">
          <pattern id="mesh" width="2" height="2" patternUnits="userSpaceOnUse">
            <rect width="2" height="2" fill="#a0a0a0" />
            <rect width="1" height="1" />
            <rect x="1" y="1" width="1" height="1" />
          </pattern>
          <rect width="16" height="19" fill="url(#mesh)" />
        </svg>
        <button aria-label="Scroll right" className="flex h-[19px] w-[17px] items-center justify-center border-r border-b border-[#606060]">
          <svg width="4" height="8"><path d="M0 0v8l4-4z" /></svg>
        </button>
        <Spinner />
        <button className="ml-[5px] w-[53px] text-left">Recover</button>
        <button className="w-[34px] text-left">Save</button>
        <button className="w-[39px] text-left">Color</button>
        <button className="w-[46px] text-left">Display</button>
        <button className="h-[19px] w-[43px] border-t border-l border-[#808080] bg-[#f8f8f8]">DE-(-1)</button>
        <span className="w-[47px]" />
      </div>
    </div>
  );
}

function WindowsLogo() {
  return (
    <svg width="24" height="24">
      <linearGradient id="win" x1="0" y1="0" x2="1" y2="1">
        <stop offset="0" stopColor="#4cc8f4" />
        <stop offset="1" stopColor="#0068c8" />
      </linearGradient>
      <path d="M0 0h11.500v11.500H0zM12.500 0H24v11.500H12.500zM0 12.500h11.500V24H0zM12.500 12.500H24V24H12.500z" fill="url(#win)" />
    </svg>
  );
}

function EdgeLogo() {
  return (
    <svg width="24" height="24">
      <linearGradient id="edge-top" x1="0" y1="0" x2="1" y2="0.600">
        <stop offset="0" stopColor="#1f8fd8" />
        <stop offset="0.500" stopColor="#2fbfd0" />
        <stop offset="1" stopColor="#5fdc4a" />
      </linearGradient>
      <circle cx="12" cy="12" r="12" fill="#1570c4" />
      <path d="M0.300 10C1 4 6 0 12 0c7 0 12 5 12 10 0 4-3 6-6 6-3 0-4-1-3.500-2.500C16 11 14 8 10 8 5 8 1 11 0.300 14z" fill="url(#edge-top)" />
      <path d="M8.500 14c0 5 4 8 9 8 2 0 3.500-.5 5-2-1 0-2 .5-4 .5-5 0-7.500-4-6-7.500C10 11 8.500 12 8.500 14z" fill="#0b4a9e" />
      <path d="M14.500 13.500C14 15 15 16 18 16c3 0 6-2 6-5l0 2c0 3-1 5-2 7-5 1-9-2-9-5z" fill="#c7eae8" />
    </svg>
  );
}

function ChromeLogo() {
  return (
    <svg width="24" height="24" viewBox="0 0 24 24">
      <circle cx="12" cy="12" r="12" fill="#34a853" />
      <path d="M12 0v6h10.400A12 12 0 0 1 11 24l6-9z" fill="#fbbc05" />
      <path d="M1.600 6A12 12 0 0 1 22.400 6H12z" fill="#ea4335" />
      <path d="M12 12L1.600 6H12z" fill="#ea4335" />
      <circle cx="12" cy="12" r="6" fill="#fff" />
      <circle cx="12" cy="12" r="4.600" fill="#3b78e7" />
    </svg>
  );
}

function ExplorerLogo() {
  return (
    <svg width="24" height="24">
      <path d="M0 3a2 2 0 0 1 2-2h6l3 3h11v6H0z" fill="#d99a16" />
      <path d="M0 7a1 1 0 0 1 1-1h7l2-2h12a2 2 0 0 1 2 2v16H1a1 1 0 0 1-1-1z" fill="#ffcf4f" />
      <path d="M4 17a2 2 0 0 1 2-2h11a2 2 0 0 1 2 2v6H4z" fill="#1677c4" />
      <path d="M7 20h9v1H7z" fill="#0b4f8c" />
    </svg>
  );
}

function OfficeLogo({ letter, dark, light }: { letter: string; dark: string; light: string }) {
  return (
    <svg width="24" height="24">
      <rect x="12" y="3" width="11" height="18" fill="#fff" stroke={light} />
      <path d="M14 6.500h7M14 9.500h7M14 12.500h7M14 15.500h7M14 18.500h7" stroke={light} />
      <path d="M0 3l14-3v24L0 21z" fill={dark} />
      <text x="7" y="16.500" textAnchor="middle" fontSize="12" fontWeight="bold" fill="#fff">
        {letter}
      </text>
    </svg>
  );
}

function ZaloLogo() {
  return (
    <span className="relative">
      <svg width="24" height="24">
        <rect width="24" height="24" rx="7" fill="#0b6cf0" />
        <path d="M3 1h16a4 4 0 0 1 4 4v10a6 6 0 0 1-6 6H7l-4 1 1-2a7 7 0 0 1-3-5V5a4 4 0 0 1 2-4z" fill="#fff" />
        <text x="12" y="16" textAnchor="middle" fontSize="9" fontWeight="bold" fill="#0b6cf0">
          Zalo
        </text>
      </svg>
      <span className="absolute -top-2 left-3 flex h-[18px] w-[18px] items-center justify-center rounded-full bg-[#f80c0c] text-[10px] text-white">
        5+
      </span>
    </span>
  );
}

function DotsLogo() {
  return (
    <svg width="24" height="24">
      <rect width="24" height="24" fill="#3a3a3a" />
      <path d="M18 8l-3-1-4-2H2l1 4 1 4-2 4M1 20l5 2M10 17l8-1-2 3-3 3" fill="none" stroke="#8f0" strokeWidth="2.500" strokeDasharray="2.500 1" />
    </svg>
  );
}

function AlertLogo() {
  return (
    <svg width="24" height="24">
      <radialGradient id="alert">
        <stop offset="0" stopColor="#ff2a1a" />
        <stop offset="0.600" stopColor="#a80808" />
        <stop offset="1" stopColor="#1a0000" />
      </radialGradient>
      <rect width="24" height="24" rx="4" fill="#120000" />
      <circle cx="12" cy="11" r="11" fill="url(#alert)" />
      <path d="M7 4h9l2 3-1 6H9L7 9z" fill="none" stroke="#ff4a3a" strokeWidth="2" />
      <circle cx="12" cy="19" r="2" fill="#ff8070" />
    </svg>
  );
}

const apps: { name: string; icon: React.ReactNode; running?: boolean; active?: boolean }[] = [
  { name: 'Edge', icon: <EdgeLogo /> },
  { name: 'Chrome', icon: <ChromeLogo />, running: true },
  { name: 'Explorer', icon: <ExplorerLogo /> },
  { name: 'Zalo', icon: <ZaloLogo />, running: true },
  { name: 'Excel', icon: <OfficeLogo letter="X" dark="#1e7145" light="#2f8a58" /> },
  { name: 'Word', icon: <OfficeLogo letter="W" dark="#2b579a" light="#4a78bd" /> },
  { name: 'Homily', icon: <BrandMark className="h-6 w-6" />, active: true },
  { name: 'Monitor', icon: <DotsLogo />, running: true },
  { name: 'Alert', icon: <AlertLogo /> },
];

function Taskbar() {
  return (
    <footer className="flex h-12 items-center bg-[linear-gradient(90deg,#cfe0ea_0%,#cce4ea_20%,#c3e9e6_32%,#c3e9e6_72%,#cfe0e9_82%,#d3dce8_100%)] text-[12px]">
      <div className="flex-1" />
      <div className="flex items-center pl-[30px]">
        <button aria-label="Start"><WindowsLogo /></button>
        <button className="mr-0.5 ml-[15px] flex h-[31px] w-[98px] items-center justify-center gap-1.5 rounded-full bg-[#edf8f8]">
          <Search size={14} strokeWidth={2} className="-scale-x-100" />
          Search
        </button>
        {apps.map((app) => (
          <button key={app.name} aria-label={app.name} className="flex h-12 w-11 items-center justify-center">
            <span
              className={
                app.active
                  ? 'relative flex h-[38px] w-[38px] items-center justify-center rounded-md bg-[#e6f5f4]'
                  : 'relative flex h-[38px] w-[38px] items-center justify-center'
              }
            >
              {app.icon}
              {app.active && <i className="absolute bottom-0 h-[3px] w-4 rounded-full bg-[#0078d4]" />}
              {app.running && <i className="absolute bottom-0 h-[3px] w-1.5 rounded-full bg-[#7f8c8c]" />}
            </span>
          </button>
        ))}
      </div>
      <div className="flex flex-1 items-center justify-end pr-5">
        <ChevronUp size={18} strokeWidth={1.7} className="mr-[13px]" />
        <span className="mr-[18px] text-[11px]">ENG</span>
        <Wifi size={17} strokeWidth={1.8} className="mr-[7px]" />
        <Volume2 size={16} strokeWidth={1.5} className="mr-[9px]" />
        <BatteryCharging size={17} strokeWidth={2} fill="#111" className="mr-[13px]" />
        <div className="mr-2 text-right leading-4">
          <div>8:53 AM</div>
          <div>28/03/2023</div>
        </div>
        <span className="flex h-4 w-4 items-center justify-center rounded-full bg-[#0078d4] text-[10px] text-white">3</span>
      </div>
    </footer>
  );
}

export default function App() {
  return (
    <div className="flex min-h-screen flex-col bg-[#f0f0f0] font-['Open_Sans',sans-serif] text-black">
      <TitleBar />
      <MenuBar />
      <ToolBar />
      <div className="flex flex-1">
        <aside className="w-[27px] shrink-0 font-['Roboto',sans-serif] text-[12px] leading-none font-bold">
          <SideGroup items={drawTools} pressed="Line down" height="h-[321px]" />
          <SideGroup items={plain('D W M Q H Y C')} pressed="W" height="h-[166px]" />
          <SideGroup items={plain('ORD BAR FAR')} pressed="FAR" height="h-[77px]" />
        </aside>
        <main className="grid flex-1 grid-cols-2 grid-rows-[471fr_217fr_236fr] gap-x-0.5 gap-y-2 border-t border-[#a0a0a0] px-px pt-px font-['Liberation_Sans',sans-serif]">
          <BbeChart />
          <TeChart />
          <DeChart />
          <RsiChart />
          <McdChart />
          <KdjChart />
        </main>
        <aside className="w-[27px] shrink-0 border-l border-[#a0a0a0] font-['Roboto',sans-serif] text-[11px] leading-none font-bold">
          <SideGroup items={signalTools} height="h-[364px]" />
          <SideGroup items={plain('UND LKL LKR LKM ANZ')} pressed="UND" height="h-[123px]" />
          <SideGroup items={plain('CMV BKV')} pressed="CMV" height="h-[57px]" />
        </aside>
      </div>
      <StatusBar />
      <Taskbar />
    </div>
  );
}
